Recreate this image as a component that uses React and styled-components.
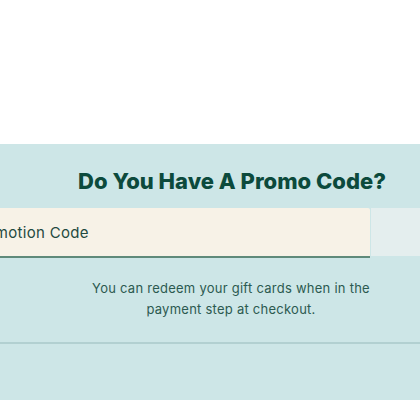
import React from "react";
import styled, { createGlobalStyle } from "styled-components";

const GlobalStyle = createGlobalStyle`
  html, body {
    margin: 0;
    padding: 0;
    background: #ffffff;
    overflow: hidden;
  }
  * {
    box-sizing: border-box;
  }
`;

const Page = styled.div`
  width: 420px;
  height: 420px;
  padding-top: 144px;
  font-family: Inter, "Noto Sans", sans-serif;
`;

const Panel = styled.section`
  height: 256px;
  background: #cde6e7;
  padding-top: 23px;
  overflow: hidden;
`;

const Heading = styled.h2`
  margin: 0;
  padding-left: 44px;
  text-align: center;
  font-size: 22px;
  line-height: 28px;
  font-weight: 800;
  color: #0c4a3c;
`;

const FormRow = styled.form`
  display: flex;
  margin: 13px 0 0 -46px;
  width: 520px;
`;

const PromoInput = styled.input`
  width: 416px;
  height: 50px;
  border: none;
  border-bottom: 2px solid #5f8a7a;
  border-radius: 2px 2px 0 0;
  background: #f7f2e7;
  padding: 0 16px;
  font-family: inherit;
  font-size: 15px;
  letter-spacing: 0.3px;
  color: #1f4a40;
  outline: none;

  &::placeholder {
    color: #1f4a40;
    opacity: 1;
  }
`;

const ApplyButton = styled.button`
  flex: 1;
  height: 48px;
  margin-left: 1px;
  border: none;
  background: #e4eeee;
  color: #1f4a40;
  font-family: inherit;
`;

const Note = styled.p`
  margin: 20px 0 0;
  padding-left: 42px;
  text-align: center;
  font-size: 13px;
  line-height: 21px;
  color: #2c5a50;
  letter-spacing: 0.25px;
`;

const NoteLine = styled.span`
  display: block;
`;

const Divider = styled.hr`
  margin: 22px 0 0;
  border: none;
  border-top: 2px solid #b2d0d1;
`;

export default function App() {
  return (
    <>
      <GlobalStyle />
      <Page>
        <Panel>
          <Heading>Do You Have A Promo Code?</Heading>
          <FormRow onSubmit={(e) => e.preventDefault()}>
            <PromoInput placeholder="Promotion Code" />
            <ApplyButton type="submit" aria-label="Apply" />
          </FormRow>
          <Note>
            <NoteLine>You can redeem your gift cards when in the</NoteLine>
            <NoteLine>payment step at checkout.</NoteLine>
          </Note>
          <Divider />
        </Panel>
      </Page>
    </>
  );
}
